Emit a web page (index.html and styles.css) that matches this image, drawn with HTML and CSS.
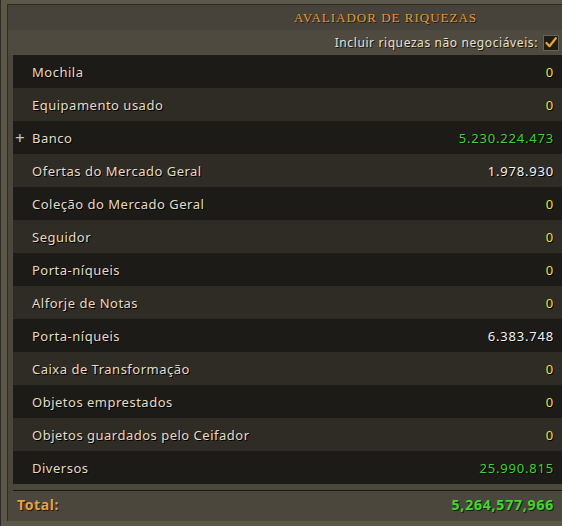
FILE: index.html
```html
<!DOCTYPE html>
<html lang="pt">
<head>
<meta charset="utf-8">
<link rel="stylesheet" href="styles.css">
</head>
<body>
<div class="frame">
  <div class="inner">
    <div class="titlebar"><span class="title">Avaliador de Riquezas</span></div>
    <div class="optbar">
      <span class="optlabel">Incluir riquezas não negociáveis:</span>
      <span class="check"><svg width="12" height="11" viewBox="0 0 12 11"><path d="M1.5 6 L4.5 9.2 L10.8 1.2" fill="none" stroke="#e8a73a" stroke-width="2.2" stroke-linecap="round" stroke-linejoin="round"/></svg></span>
    </div>
    <div class="table">
      <div class="row"><span class="lbl">Mochila</span><span class="val zero">0</span></div>
      <div class="row"><span class="lbl">Equipamento usado</span><span class="val zero">0</span></div>
      <div class="row"><span class="plus">+</span><span class="lbl">Banco</span><span class="val green">5.230.224.473</span></div>
      <div class="row"><span class="lbl">Ofertas do Mercado Geral</span><span class="val white">1.978.930</span></div>
      <div class="row"><span class="lbl">Coleção do Mercado Geral</span><span class="val zero">0</span></div>
      <div class="row"><span class="lbl">Seguidor</span><span class="val zero">0</span></div>
      <div class="row"><span class="lbl">Porta-níqueis</span><span class="val zero">0</span></div>
      <div class="row"><span class="lbl">Alforje de Notas</span><span class="val zero">0</span></div>
      <div class="row"><span class="lbl">Porta-níqueis</span><span class="val white">6.383.748</span></div>
      <div class="row"><span class="lbl">Caixa de Transformação</span><span class="val zero">0</span></div>
      <div class="row"><span class="lbl">Objetos emprestados</span><span class="val zero">0</span></div>
      <div class="row"><span class="lbl">Objetos guardados pelo Ceifador</span><span class="val zero">0</span></div>
      <div class="row"><span class="lbl">Diversos</span><span class="val green">25.990.815</span></div>
    </div>
    <div class="totalbar">
      <span class="totlbl">Total:</span>
      <span class="totval">5,264,577,966</span>
    </div>
  </div>
</div>
</body>
</html>
```
FILE: styles.css
```css
* { box-sizing: border-box; }
html, body { margin: 0; padding: 0; }
body {
  width: 562px;
  height: 526px;
  overflow: hidden;
  background: #3c382f;
  font-family: "Noto Sans", "Open Sans", sans-serif;
}
.frame {
  width: 562px;
  height: 526px;
  background: #5b5749;
  padding: 4px 0 5px 6px;
  border-left: 1px solid #2c2a24;
}
.inner {
  height: 100%;
  background: #4c473c;
  border-left: 1px solid #2e2b24;
  border-top: 1px solid #2e2b24;
  display: flex;
  flex-direction: column;
}
.titlebar {
  height: 25px;
  background: #48433a;
  padding-left: 286px;
  display: flex;
  align-items: center;
}
.title {
  font-family: "Liberation Serif", "DejaVu Serif", serif;
  text-transform: uppercase;
  font-size: 13px;
  letter-spacing: 1px;
  color: #e39a32;
  text-shadow: 1px 1px 0 #1e1a12;
}
.optbar {
  height: 25px;
  background: #4f4a40;
  display: flex;
  align-items: center;
  justify-content: flex-end;
  padding-right: 3px;
  gap: 5px;
}
.optlabel {
  font-size: 12px;
  letter-spacing: 0.6px;
  color: #e8e0cc;
  text-shadow: 1px 1px 0 #1a1712;
}
.check {
  width: 16px;
  height: 16px;
  background: #201d17;
  border: 1px solid #6a6352;
  display: flex;
  align-items: center;
  justify-content: center;
}
.table {
  margin-left: 5px;
  display: flex;
  flex-direction: column;
}
.row {
  height: 33px;
  display: flex;
  align-items: center;
  padding: 0 8px 0 19px;
  position: relative;
}
.row:nth-child(odd) { background: #1d1b17; }
.row:nth-child(even) { background: #2f2b25; }
.lbl {
  flex: 1;
  font-size: 13px;
  letter-spacing: 0.5px;
  color: #e6dcc2;
  text-shadow: 1px 1px 0 #000;
}
.plus {
  position: absolute;
  left: 2px;
  font-size: 17px;
  color: #b9cbd6;
  top: 5px;
}
.val {
  font-size: 13px;
  letter-spacing: 0.8px;
  text-shadow: 1px 1px 0 #000;
}
.zero { color: #ece23a; }
.green { color: #3fd234; }
.white { color: #f2f2f2; }
.totalbar {
  margin-top: 6px;
  margin-left: 5px;
  border-top: 1px solid #1c1a15;
  flex: 1;
  display: flex;
  align-items: center;
  padding: 0 8px 3px 4px;
  justify-content: space-between;
}
.totlbl {
  font-size: 14px;
  font-weight: bold;
  letter-spacing: 0.6px;
  color: #e8a040;
  text-shadow: 1px 1px 0 #1a1610;
}
.totval {
  font-size: 14px;
  font-weight: bold;
  letter-spacing: 0.8px;
  color: #42d62f;
  text-shadow: 1px 1px 0 #10220c;
}
```
